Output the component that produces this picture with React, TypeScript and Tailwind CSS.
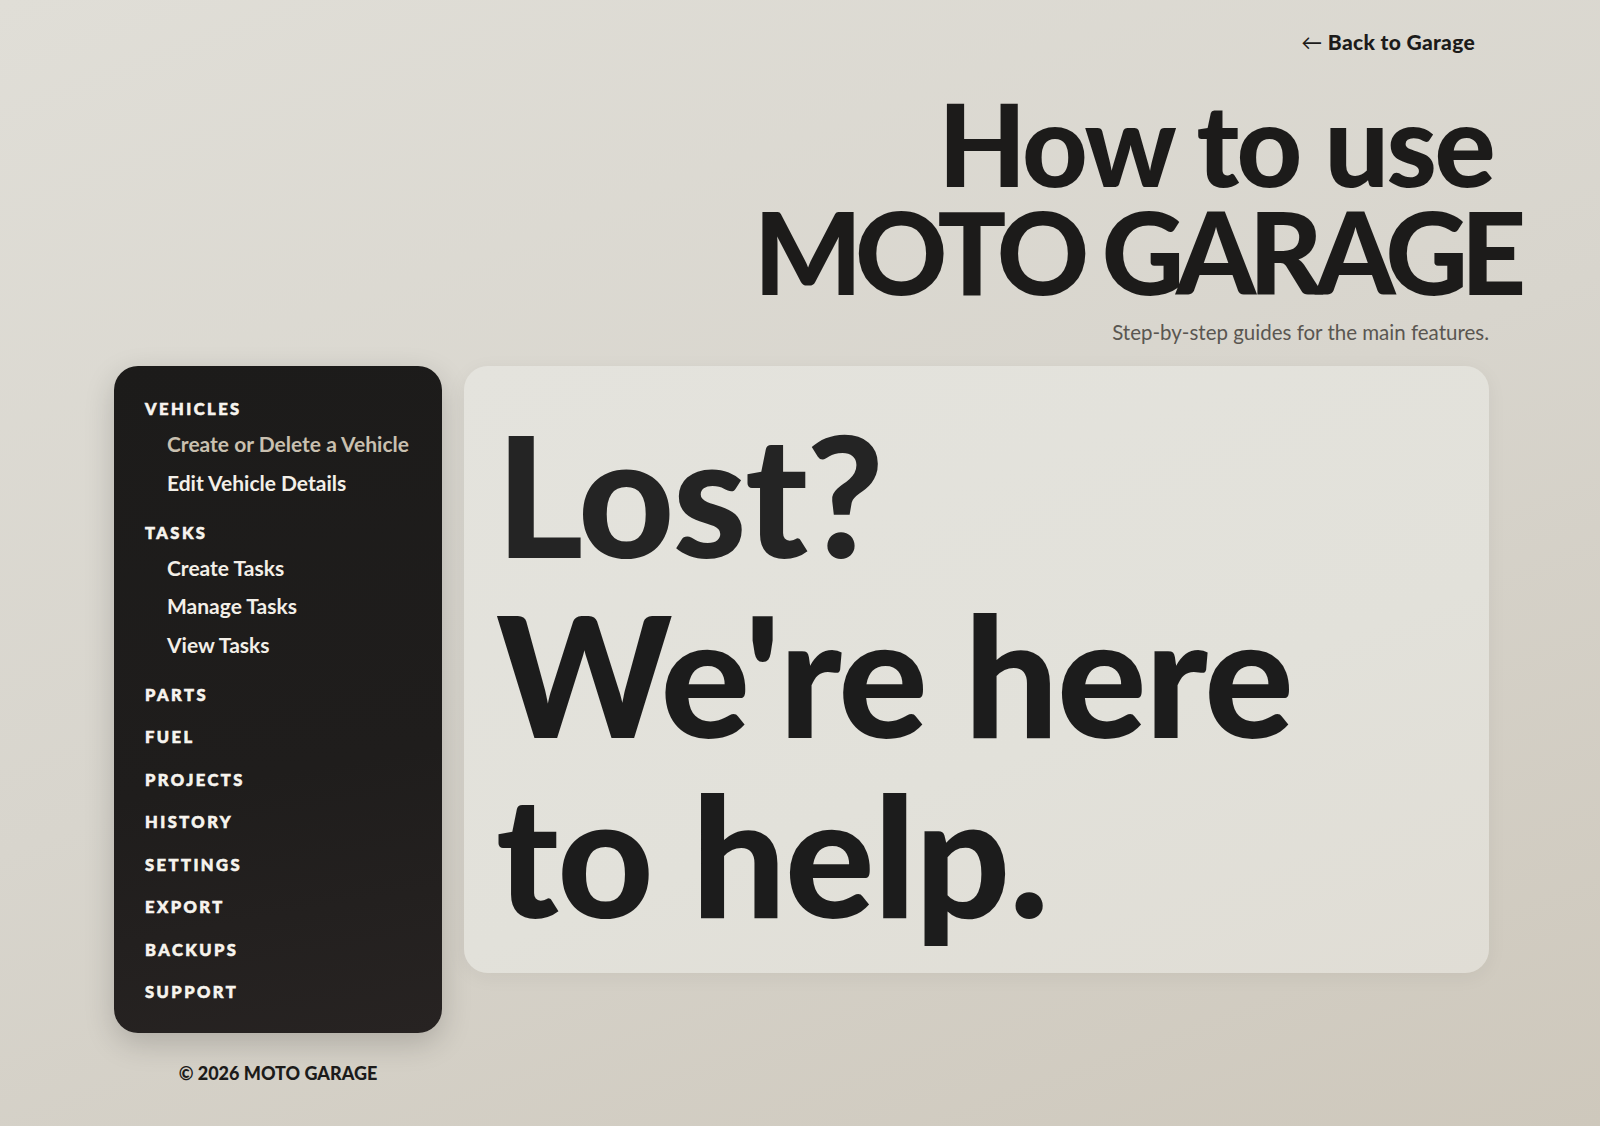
import React from "react";

const groups: { label: string; items?: { text: string; active?: boolean }[] }[] = [
  {
    label: "VEHICLES",
    items: [{ text: "Create or Delete a Vehicle", active: true }, { text: "Edit Vehicle Details" }],
  },
  { label: "TASKS", items: [{ text: "Create Tasks" }, { text: "Manage Tasks" }, { text: "View Tasks" }] },
  { label: "PARTS" },
  { label: "FUEL" },
  { label: "PROJECTS" },
  { label: "HISTORY" },
  { label: "SETTINGS" },
  { label: "EXPORT" },
  { label: "BACKUPS" },
  { label: "SUPPORT" },
];

export default function App() {
  return (
    <div className="min-h-screen w-full bg-[linear-gradient(160deg,#e0ded7_0%,#d8d5cd_50%,#cec8bc_100%)] font-['Lato',sans-serif] text-[#1c1b1a]">
      <div className="ml-[114px] flex w-[1375px] flex-col pt-[28px] pb-[40px]">
        <header className="flex flex-col items-end">
          <a className="mr-[14px] text-[21px] font-black leading-[28px] tracking-[0.015em] text-[#1c1b1a]">
            <span className="font-normal">←</span> Back to Garage
          </a>
          <h1 className="mt-[33px] mr-[-30px] text-right text-[114px] font-black leading-[108px]">
            <span className="block pr-[26px] tracking-[-0.022em]">How to use</span>
            <span className="block tracking-[-0.064em]">MOTO GARAGE</span>
          </h1>
          <p className="mt-[15px] text-[20.5px] font-normal leading-[24px] text-[#5a5651]">
            Step-by-step guides for the main features.
          </p>
        </header>

        <div className="mt-[22px] flex items-start gap-[22px]">
          <div className="flex w-[328px] shrink-0 flex-col items-center">
            <nav className="flex w-full flex-col gap-[18.5px] rounded-[24px] bg-[linear-gradient(170deg,#1c1b1a_0%,#1f1d1c_60%,#272322_100%)] px-[31px] pt-[31px] pb-[29px] shadow-[0_10px_30px_rgba(0,0,0,0.18)]">
              {groups.map((g) => (
                <div key={g.label} className="flex flex-col">
                  <div className="text-[16.5px] font-black leading-[24px] tracking-[0.15em] text-[#f7f4ee] [-webkit-text-stroke:0.6px_#f7f4ee]">
                    {g.label}
                  </div>
                  {g.items && (
                    <ul className="mt-[4px] flex flex-col">
                      {g.items.map((it) => (
                        <li
                          key={it.text}
                          className={
                            "py-[5px] pl-[22px] text-[21px] font-bold leading-[28.5px] " +
                            (it.active ? "text-[#c9c0b0]" : "text-[#f3efe8]")
                          }
                        >
                          {it.text}
                        </li>
                      ))}
                    </ul>
                  )}
                </div>
              ))}
            </nav>
            <div className="mt-[28px] text-[18px] font-black leading-[24px] text-[#1c1b1a]">© 2026 MOTO GARAGE</div>
          </div>

          <main className="flex-1 rounded-[24px] bg-[linear-gradient(160deg,#e4e3dd_0%,#e2e1da_60%,#e0ddd5_100%)] pt-[38px] pb-[29px] pl-[32px] shadow-[0_4px_20px_rgba(0,0,0,0.05)]">
            <h2 className="text-[167px] font-black leading-[180px] tracking-[-0.01em] text-[#1c1c1c]">
              <span className="block text-[#242424]">Lost?</span>
              <span className="block">We're here</span>
              <span className="block tracking-[-0.006em]">to help.</span>
            </h2>
          </main>
        </div>
      </div>
    </div>
  );
}
